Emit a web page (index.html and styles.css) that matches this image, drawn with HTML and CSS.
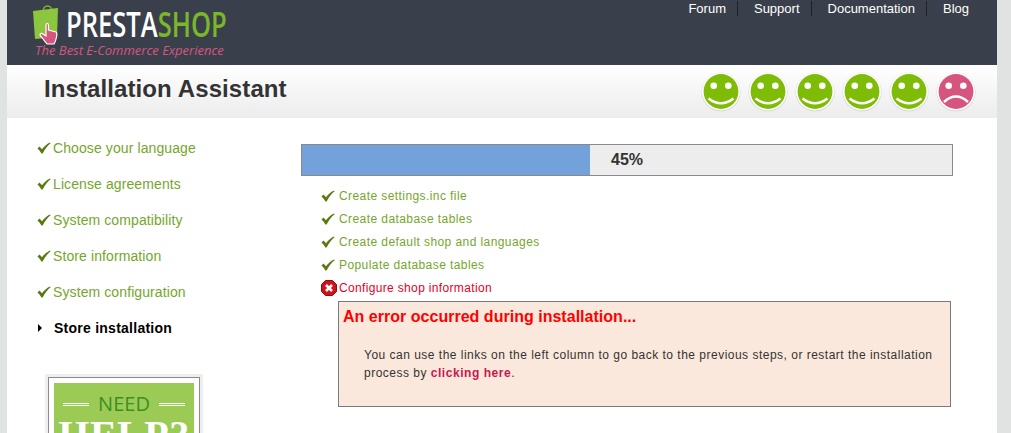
FILE: index.html
```html
<!DOCTYPE html>
<html lang="en">
<head>
    <meta charset="UTF-8">
    <title>PrestaShop - Installation Assistant</title>
    <link rel="stylesheet" href="styles.css">
</head>
<body>
    <svg class="icon-defs" width="0" height="0">
        <symbol id="check" viewBox="0 0 14 12">
            <path d="M0.5 6.5 L2.5 4.6 L5 7.2 C7 4.4 9.6 2 13 0.4 L13.6 1.2 C10.4 3.8 7.8 7.2 5.6 11.6 L4.4 11.6 C3.4 9.6 2 8 0.5 6.5 Z"/>
        </symbol>
        <symbol id="smile" viewBox="0 0 40 40">
            <circle cx="20" cy="20" r="19.5" fill="#d8d8d8"/>
            <circle cx="20" cy="19.5" r="19" fill="#fff"/>
            <circle cx="20" cy="19.5" r="17.4" fill="currentColor"/>
            <circle cx="12.7" cy="13.8" r="3.3" fill="#fff"/>
            <circle cx="27.3" cy="13.8" r="3.3" fill="#fff"/>
            <path d="M7.5 26.5 Q20 36 32.500 26.500" fill="none" stroke="#fff" stroke-width="2.6"/>
        </symbol>
        <symbol id="sad" viewBox="0 0 40 40">
            <circle cx="20" cy="20" r="19.5" fill="#d8d8d8"/>
            <circle cx="20" cy="19.5" r="19" fill="#fff"/>
            <circle cx="20" cy="19.5" r="17.4" fill="currentColor"/>
            <circle cx="12.7" cy="13.8" r="3.3" fill="#fff"/>
            <circle cx="27.3" cy="13.8" r="3.3" fill="#fff"/>
            <path d="M8 30 Q20 19 32 30" fill="none" stroke="#fff" stroke-width="2.6"/>
        </symbol>
    </svg>

    <div class="page">
        <header class="top-bar">
            <div class="logo">
                <svg class="logo-bag" width="36" height="46" viewBox="0 0 36 46">
                    <path d="M11 9 C11 1 20 1 20 9" fill="none" stroke="#7fb52b" stroke-width="1.6"/>
                    <path d="M1 8 L26 5 L25 34 L3 36 Z" fill="#8cc63f"/>
                    <path d="M14 22 C14 20 16.500 20 16.500 22 L16.500 27 L24 29 C26 30 24 38 22 41 L15 41 L8 32 C8 30 10 30 11 31 L14 33 Z" fill="#d6557f" stroke="#fff" stroke-width="1.2"/>
                </svg>
                <div class="logo-text">
                    <div class="logo-name">PRESTA<span class="logo-shop">SHOP</span></div>
                    <div class="logo-tag">The Best E-Commerce Experience</div>
                </div>
            </div>
            <nav class="top-nav">
                <a href="#">Forum</a>
                <a href="#">Support</a>
                <a href="#">Documentation</a>
                <a href="#">Blog</a>
            </nav>
        </header>

        <div class="title-band">
            <h1>Installation Assistant</h1>
            <div class="smileys">
                <svg class="smiley"><use href="#smile"/></svg>
                <svg class="smiley"><use href="#smile"/></svg>
                <svg class="smiley"><use href="#smile"/></svg>
                <svg class="smiley"><use href="#smile"/></svg>
                <svg class="smiley"><use href="#smile"/></svg>
                <svg class="smiley smiley-sad"><use href="#sad"/></svg>
            </div>
        </div>

        <div class="main">
            <aside class="sidebar">
                <ul class="menu">
                    <li class="menu-item"><svg class="menu-check"><use href="#check"/></svg>Choose your language</li>
                    <li class="menu-item"><svg class="menu-check"><use href="#check"/></svg>License agreements</li>
                    <li class="menu-item"><svg class="menu-check"><use href="#check"/></svg>System compatibility</li>
                    <li class="menu-item"><svg class="menu-check"><use href="#check"/></svg>Store information</li>
                    <li class="menu-item"><svg class="menu-check"><use href="#check"/></svg>System configuration</li>
                    <li class="menu-item active"><span class="arrow"></span>Store installation</li>
                </ul>
                <div class="help-card">
                    <div class="help-inner">
                        <div class="help-need"><span class="help-rule"></span>NEED<span class="help-rule"></span></div>
                        <div class="help-big">HELP?</div>
                    </div>
                </div>
            </aside>

            <section class="content">
                <div class="progress">
                    <div class="progress-fill"></div>
                    <span class="progress-label">45%</span>
                </div>
                <ul class="steps">
                    <li class="step"><svg class="step-check"><use href="#check"/></svg>Create settings.inc file</li>
                    <li class="step"><svg class="step-check"><use href="#check"/></svg>Create database tables</li>
                    <li class="step"><svg class="step-check"><use href="#check"/></svg>Create default shop and languages</li>
                    <li class="step"><svg class="step-check"><use href="#check"/></svg>Populate database tables</li>
                    <li class="step step-error">
                        <svg class="error-icon" width="16" height="16" viewBox="0 0 16 16">
                            <path d="M4.500 0.500 H11.500 L15.500 4.500 V11.500 L11.500 15.500 H4.500 L0.500 11.500 V4.500 Z" fill="#d0121b" stroke="#8e0c14"/>
                            <path d="M5 5 L11 11 M11 5 L5 11" stroke="#fff" stroke-width="2.6"/>
                        </svg>Configure shop information
                    </li>
                </ul>
                <div class="error-box">
                    <h3>An error occurred during installation...</h3>
                    <p>You can use the links on the left column to go back to the previous steps, or restart the installation process by <a href="#">clicking here</a>.</p>
                </div>
            </section>
        </div>
    </div>
</body>
</html>
```

FILE: styles.css
```css
html, body {
    height: 433px;
    margin: 0;
    overflow: hidden;
}

body {
    background-color: #e1e3e2;
    font-family: "Liberation Sans", Arial, sans-serif;
}

ul {
    list-style: none;
    margin: 0;
    padding: 0;
}

.icon-defs {
    position: absolute;
}

.page {
    width: 990px;
    height: 433px;
    margin-left: 7px;
    background-color: #fff;
    overflow: hidden;
}

/* Barra escura do topo */
.top-bar {
    display: flex;
    justify-content: space-between;
    height: 65px;
    background-color: #3a404b;
}

.logo {
    display: flex;
    padding: 3px 0 0 25px;
}

.logo-bag {
    flex: none;
}

.logo-name {
    font-family: "Open Sans", sans-serif;
    font-size: 35px;
    font-weight: 600;
    line-height: 36px;
    margin: 3px 0 0 -2px;
    color: #fff;
    white-space: nowrap;
    transform: scaleX(0.73);
    transform-origin: left center;
}

.logo-shop {
    color: #7ab829;
}

.logo-tag {
    font-family: "Open Sans", sans-serif;
    font-style: italic;
    font-size: 13px;
    line-height: 16px;
    margin-left: -33px;
    color: #d6557f;
    white-space: nowrap;
}

.top-nav {
    display: flex;
    align-items: flex-start;
    padding: 1px 28px 0 0;
}

.top-nav a {
    font-size: 13px;
    line-height: 15px;
    color: #fff;
    text-decoration: none;
    padding: 0 11px 0 16px;
    border-right: 1px solid #1d2026;
}

.top-nav a:last-child {
    padding-right: 0;
    border-right: none;
}

/* Faixa do titulo */
.title-band {
    display: flex;
    justify-content: space-between;
    align-items: center;
    height: 53px;
    background: linear-gradient(#fff, #ececec);
}

.title-band h1 {
    margin: 0 0 6px 37px;
    font-size: 24px;
    font-weight: 700;
    letter-spacing: 0.1px;
    color: #333;
}

.smileys {
    display: flex;
    gap: 7px;
    padding-right: 21px;
}

.smiley {
    width: 40px;
    height: 40px;
    color: #7fbc07;
}

.smiley-sad {
    color: #d6557f;
}

/* Colunas */
.main {
    display: flex;
}

.sidebar {
    width: 294px;
    flex: none;
}

.menu {
    padding: 12px 0 0 30px;
}

.menu-item {
    display: flex;
    align-items: center;
    height: 36px;
    font-size: 14px;
    letter-spacing: 0.1px;
    color: #76a62d;
}

.menu-check {
    width: 14px;
    height: 12px;
    margin-right: 2px;
    fill: #5a7a10;
}

.menu-item.active {
    font-weight: 700;
    letter-spacing: 0.25px;
    color: #000;
}

.arrow {
    width: 0;
    height: 0;
    margin: 0 12px 0 1px;
    border-left: 4px solid #000;
    border-top: 4px solid transparent;
    border-bottom: 4px solid transparent;
}

.help-card {
    width: 140px;
    height: 120px;
    margin: 31px 0 0 41px;
    padding: 5px;
    background-color: #fff;
    border: 1px solid #8c8c8c;
    outline: 3px solid #eee;
}

.help-inner {
    height: 100%;
    background-color: #9ccb55;
    text-align: center;
    overflow: hidden;
}

.help-need {
    display: flex;
    justify-content: center;
    align-items: center;
    gap: 9px;
    padding-top: 10px;
    font-family: "Open Sans", sans-serif;
    font-size: 20px;
    line-height: 22px;
    color: #3b8f23;
}

.help-rule {
    width: 26px;
    height: 1px;
    border-top: 1px solid #fff;
    border-bottom: 1px solid #fff;
}

.help-big {
    font-family: "Liberation Serif", serif;
    font-size: 40px;
    font-weight: 700;
    line-height: 40px;
    letter-spacing: 0.5px;
    color: #fff;
}

/* Conteudo */
.content {
    width: 652px;
    padding-top: 26px;
}

.progress {
    position: relative;
    height: 30px;
    background-color: #ededed;
    border: 1px solid #8a8a8a;
    text-align: center;
}

.progress-fill {
    position: absolute;
    top: 0;
    bottom: 0;
    left: 0;
    width: 288px;
    background-color: #72a2d9;
}

.progress-label {
    position: relative;
    font-size: 16px;
    font-weight: 700;
    line-height: 30px;
    color: #333;
}

.steps {
    padding: 8px 0 0 20px;
}

.step {
    display: flex;
    align-items: center;
    height: 23px;
    font-size: 12px;
    letter-spacing: 0.42px;
    color: #76a62d;
}

.step-check {
    width: 14px;
    height: 12px;
    margin-right: 4px;
    fill: #5a7a10;
}

.step-error {
    letter-spacing: 0.34px;
    color: #e8001f;
}

.error-icon {
    margin-right: 2px;
}

.error-box {
    width: 611px;
    height: 104px;
    margin: 2px 0 0 37px;
    background-color: #fbe8dc;
    border: 1px solid #7a7a7a;
}

.error-box h3 {
    margin: 5px 0 0 4px;
    font-size: 16px;
    line-height: 20px;
    letter-spacing: 0.02px;
    color: #f00;
}

.error-box p {
    margin: 19px 17px 0 25px;
    font-size: 12px;
    line-height: 18px;
    letter-spacing: 0.49px;
    color: #333;
}

.error-box a {
    font-weight: 700;
    letter-spacing: 0.55px;
    color: #c8174f;
    text-decoration: none;
}
```
